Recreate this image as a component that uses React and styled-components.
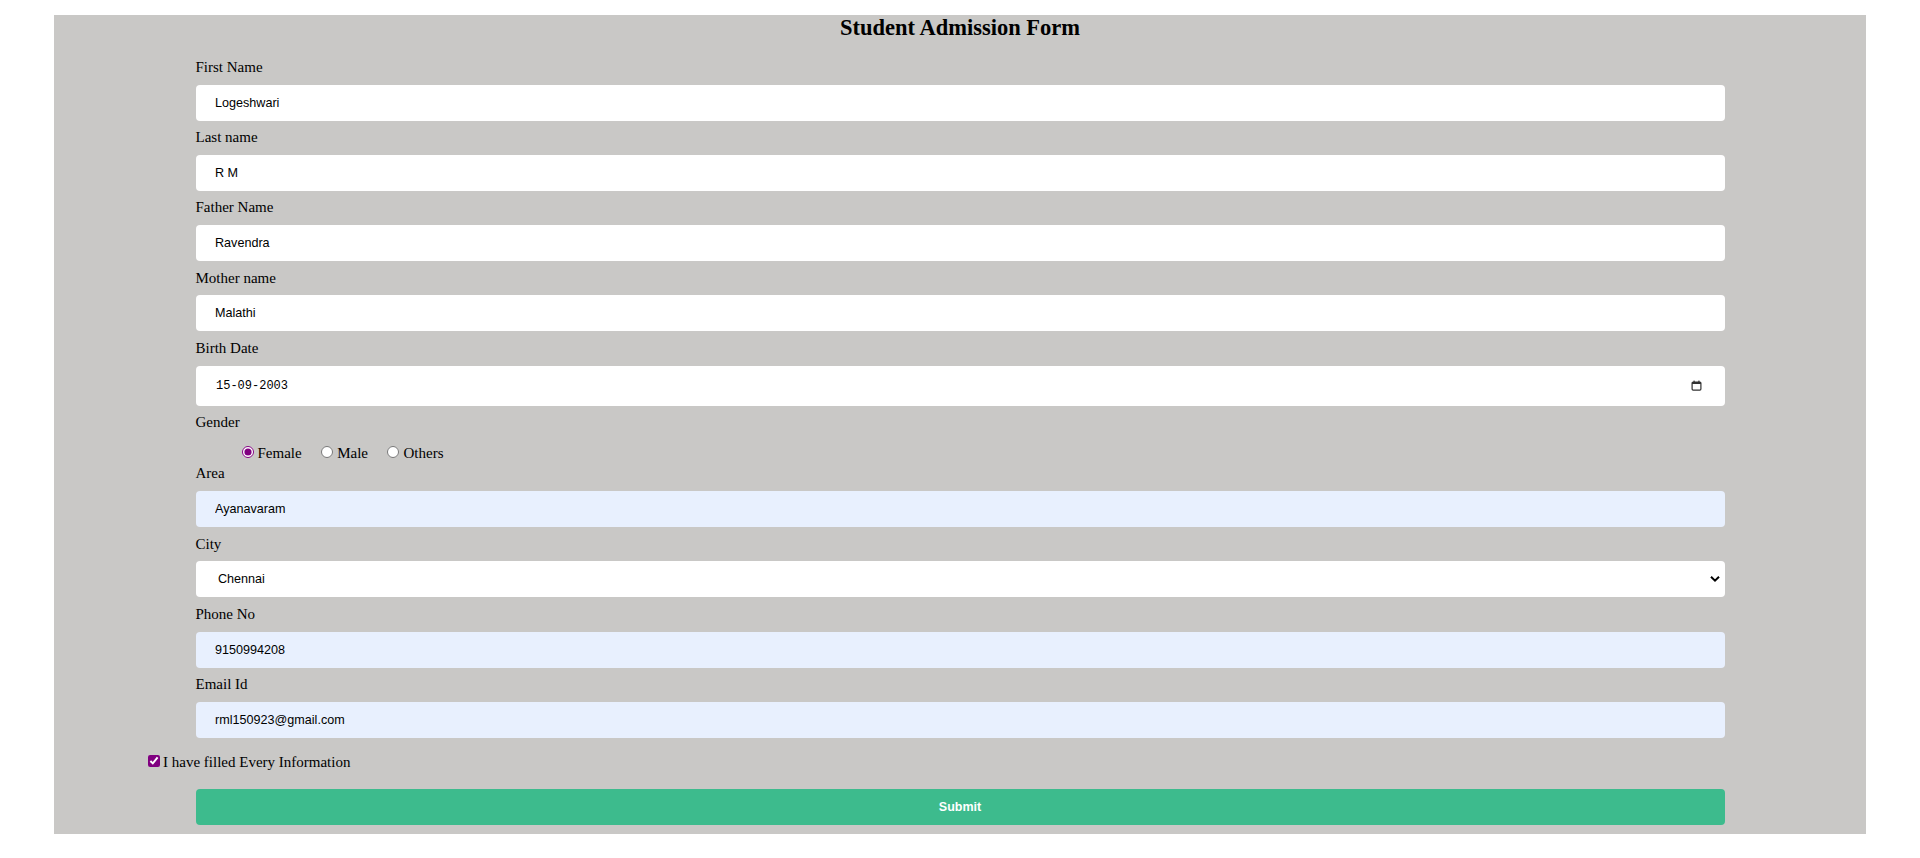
import React from 'react'
import styled, { createGlobalStyle } from 'styled-components'

const GlobalStyle = createGlobalStyle`
    body {
        margin: 0;
        background: #fff;
        font-family: "Liberation Serif", "Times New Roman", serif;
        color: #000;
    }
`;

const fields = [
    { label: 'First Name', value: 'Logeshwari' },
    { label: 'Last name', value: 'R M' },
    { label: 'Father Name', value: 'Ravendra' },
    { label: 'Mother name', value: 'Malathi' },
];

const contact = [
    { label: 'Phone No', value: '9150994208', filled: true },
    { label: 'Email Id', value: 'rml150923@gmail.com', filled: true },
];

function CalendarIcon() {
    return (
        <svg width="11" height="11" viewBox="0 0 11 11">
            <rect x="1.1" y="2.1" width="8.8" height="8" rx="1" fill="none" stroke="#333" strokeWidth="1.2" />
            <rect x="1" y="2" width="9" height="2" fill="#333" />
            <rect x="2.5" y="0.6" width="1.2" height="2" fill="#333" />
            <rect x="7.3" y="0.6" width="1.2" height="2" fill="#333" />
        </svg>
    )
}

function App() {
    return (
        <>
            <GlobalStyle />
            <Panel onSubmit={(e) => e.preventDefault()}>
                <Title>Student Admission Form</Title>
                <Fields>
                    {fields.map((f) => (
                        <React.Fragment key={f.label}>
                            <Label>{f.label}</Label>
                            <Input type="text" defaultValue={f.value} />
                        </React.Fragment>
                    ))}
                    <Label>Birth Date</Label>
                    <DateBox>
                        <DateText type="text" defaultValue="15-09-2003" />
                        <CalendarIcon />
                    </DateBox>
                    <Label>Gender</Label>
                    <RadioRow>
                        <Option><Radio type="radio" name="gender" defaultChecked />Female</Option>
                        <Option><Radio type="radio" name="gender" />Male</Option>
                        <Option><Radio type="radio" name="gender" />Others</Option>
                    </RadioRow>
                    <Label>Area</Label>
                    <Input type="text" defaultValue="Ayanavaram" $filled />
                    <Label>City</Label>
                    <SelectWrap>
                        <Select defaultValue="Chennai">
                            <option>Chennai</option>
                            <option>Coimbatore</option>
                            <option>Madurai</option>
                        </Select>
                        <Chevron width="10" height="7" viewBox="0 0 10 7">
                            <path d="M1 1.2 L5 5.2 L9 1.2" fill="none" stroke="#000" strokeWidth="2" />
                        </Chevron>
                    </SelectWrap>
                    {contact.map((f) => (
                        <React.Fragment key={f.label}>
                            <Label>{f.label}</Label>
                            <Input type="text" defaultValue={f.value} $filled={f.filled} />
                        </React.Fragment>
                    ))}
                </Fields>
                <CheckRow>
                    <Checkbox type="checkbox" defaultChecked />
                    I have filled Every Information
                </CheckRow>
                <Submit type="submit">Submit</Submit>
            </Panel>
        </>
    )
}

const Panel = styled.form`
    margin: 15px 54px 0;
    padding-bottom: 9px;
    background: #c9c8c6;
    display: flex;
    flex-direction: column;
`;

const Title = styled.h2`
    margin: 0 0 18px;
    font-size: 22.5px;
    line-height: 25.9px;
    font-weight: 700;
    text-align: center;
`;

const Fields = styled.div`
    width: 1529px;
    margin: 0 auto;
    display: flex;
    flex-direction: column;
`;

const Label = styled.label`
    display: block;
    font-size: 15px;
    line-height: 17.25px;
`;

const Input = styled.input`
    box-sizing: border-box;
    width: 100%;
    height: 36px;
    margin: 8.5px 0;
    padding: 0 19.5px;
    border: none;
    border-radius: 4px;
    outline: none;
    background: ${(p) => (p.$filled ? '#e8f0fe' : '#fff')};
    color: #000;
    font-family: "Liberation Sans", Arial, sans-serif;
    font-size: 12.6px;
`;

const DateBox = styled.div`
    box-sizing: border-box;
    height: 40px;
    margin: 8.5px 0;
    padding: 0 23px 0 20.5px;
    display: flex;
    align-items: center;
    background: #fff;
    border-radius: 4px;
`;

const DateText = styled.input`
    flex: 1;
    padding: 0;
    border: none;
    outline: none;
    background: transparent;
    color: #000;
    font-family: "Liberation Mono", "DejaVu Sans Mono", monospace;
    font-size: 12px;
`;

const RadioRow = styled.div`
    margin: 12px 0 2.6px 41px;
    font-size: 15px;
    line-height: 17.25px;
`;

const Option = styled.label`
    margin-right: 14.5px;
`;

const Radio = styled.input`
    width: 12px;
    height: 12px;
    margin: 3px 4px 0 5px;
    accent-color: purple;
`;

const SelectWrap = styled.div`
    position: relative;
    margin: 8.5px 0;
`;

const Select = styled.select`
    box-sizing: border-box;
    display: block;
    width: 100%;
    height: 36px;
    padding: 0 22.5px;
    appearance: none;
    border: none;
    border-radius: 4px;
    outline: none;
    background: #fff;
    color: #000;
    font-family: "Liberation Sans", Arial, sans-serif;
    font-size: 12.6px;
`;

const Chevron = styled.svg`
    position: absolute;
    right: 5px;
    top: 50%;
    transform: translateY(-50%);
    pointer-events: none;
`;

const CheckRow = styled.label`
    display: block;
    margin: 6px 0 17.5px 90px;
    font-size: 15px;
    line-height: 17.25px;
`;

const Checkbox = styled.input`
    width: 12px;
    height: 12px;
    margin: 3px 3px 3px 4px;
    accent-color: purple;
`;

const Submit = styled.button`
    align-self: center;
    width: 1529px;
    height: 36px;
    border: none;
    border-radius: 4px;
    background: #3dbb8d;
    color: #fff;
    font-family: "Liberation Sans", Arial, sans-serif;
    font-size: 12.5px;
    font-weight: 700;
    cursor: pointer;
`;

export default App;
